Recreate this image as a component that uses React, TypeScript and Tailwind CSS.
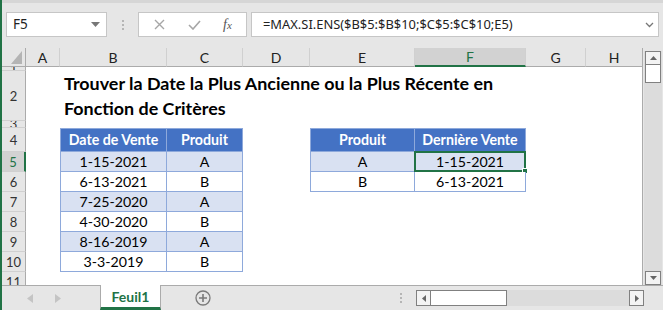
import React from "react";

const CAL = { fontFamily: "Lato, 'Liberation Sans', sans-serif" };
const UI = { fontFamily: "'Noto Sans', 'Open Sans', sans-serif" };

const cols = ["A", "B", "C", "D", "E", "F", "G", "H"];

type Cell = {
  text?: string;
  kind?: "head" | "light" | "white";
  bl?: boolean;
  bt?: boolean;
  selected?: boolean;
};

const TB = "border-[#8EA9DB]";

function DataCell({ c }: { c?: Cell }) {
  if (!c) return <div className="bg-white" />;
  const bg =
    c.kind === "head" ? "bg-[#4472C4] text-white font-bold" : c.kind === "light" ? "bg-[#D9E1F2] text-black" : "bg-white text-black";
  return (
    <div
      className={`relative flex items-center justify-center text-[14.2px] border-r border-b ${TB} ${c.bl ? "border-l" : ""} ${
        c.bt ? "border-t" : ""
      } ${bg}`}
      style={CAL}
    >
      {c.text}
      {c.selected && (
        <div className="absolute -left-[1px] -top-[1px] -right-[1px] -bottom-[1px] border-2 border-[#217346]">
          <div className="absolute -right-[4px] -bottom-[4px] w-[6px] h-[6px] bg-[#217346] border border-white" />
        </div>
      )}
    </div>
  );
}

function RowHead({ n, sel }: { n: number; sel?: boolean }) {
  return (
    <div
      className={`flex items-center justify-center overflow-hidden text-[13px] border-b border-[#d0d0d0] ${
        sel ? "bg-[#d2d2d2] text-[#217346] border-r-2 border-r-[#217346]" : "bg-[#e6e6e6] text-[#333] border-r border-r-[#ababab]"
      }`}
      style={CAL}
    >
      <span className="leading-[16px]">{n}</span>
    </div>
  );
}

const leftTable: [string, string][] = [
  ["1-15-2021", "A"],
  ["6-13-2021", "B"],
  ["7-25-2020", "A"],
  ["4-30-2020", "B"],
  ["8-16-2019", "A"],
  ["3-3-2019", "B"],
];

function buildRow(r: number): (Cell | undefined)[] {
  const row: (Cell | undefined)[] = new Array(8).fill(undefined);
  if (r === 4) {
    row[1] = { text: "Date de Vente", kind: "head", bl: true, bt: true };
    row[2] = { text: "Produit", kind: "head", bt: true };
    row[4] = { text: "Produit", kind: "head", bl: true, bt: true };
    row[5] = { text: "Dernière Vente", kind: "head", bt: true };
  }
  if (r >= 5 && r <= 10) {
    const [d, p] = leftTable[r - 5];
    const kind = r % 2 === 1 ? "light" : "white";
    row[1] = { text: d, kind, bl: true };
    row[2] = { text: p, kind };
  }
  if (r === 5) {
    row[4] = { text: "A", kind: "light", bl: true };
    row[5] = { text: "1-15-2021", kind: "light", selected: true };
  }
  if (r === 6) {
    row[4] = { text: "B", kind: "white", bl: true };
    row[5] = { text: "6-13-2021", kind: "white" };
  }
  return row;
}

export default function App() {
  const rows = [1, 2, 3, 4, 5, 6, 7, 8, 9, 10, 11];
  return (
    <div className="w-[663px] h-[310px] overflow-hidden bg-[#e6e6e6] border-l-2 border-[#217346] flex flex-col" style={UI}>
      {/* top strip */}
      <div className="h-[3px] bg-[#d6d6d6]" />
      {/* formula bar */}
      <div className="h-[45px] flex items-start pt-[9px] pl-[4px]">
        <div className="w-[101px] h-[25px] bg-white border border-[#c6c6c6] flex items-center pl-[6px] pr-[6px] justify-between">
          <span className="text-[13.5px] text-[#222]">F5</span>
          <svg width="9" height="5" viewBox="0 0 9 5">
            <path d="M0 0 H9 L4.5 5 Z" fill="#777" />
          </svg>
        </div>
        <div className="w-[31px] h-[25px] flex flex-col items-center justify-center gap-[2px]">
          <div className="w-[2px] h-[2px] bg-[#b5b5b5]" />
          <div className="w-[2px] h-[2px] bg-[#b5b5b5]" />
          <div className="w-[2px] h-[2px] bg-[#b5b5b5]" />
        </div>
        <div className="w-[109px] h-[25px] bg-white border border-[#c6c6c6] flex items-center">
          <div className="w-[40px] flex justify-center">
            <svg width="11" height="11" viewBox="0 0 11 11">
              <path d="M1 1 L10 10 M10 1 L1 10" stroke="#a6a6a6" strokeWidth="1.4" />
            </svg>
          </div>
          <div className="w-[30px] flex justify-center">
            <svg width="13" height="10" viewBox="0 0 13 10">
              <path d="M1 5 L5 9 L12 1" stroke="#a6a6a6" strokeWidth="1.6" fill="none" />
            </svg>
          </div>
          <div className="flex-1 flex justify-center">
            <span className="text-[14px] italic text-[#555]" style={{ fontFamily: "'Liberation Serif', serif" }}>
              f<span className="text-[11px]">x</span>
            </span>
          </div>
        </div>
        <div className="ml-[4px] w-[408px] h-[25px] bg-white border border-[#c6c6c6] flex items-center pl-[11px] pr-[4px] justify-between">
          <span className="text-[12.9px] text-[#222] whitespace-nowrap">=MAX.SI.ENS($B$5:$B$10;$C$5:$C$10;E5)</span>
          <svg width="9" height="6" viewBox="0 0 9 6">
            <path d="M1 1 L4.5 4.5 L8 1" stroke="#777" strokeWidth="1.3" fill="none" />
          </svg>
        </div>
      </div>
      {/* grid area */}
      <div className="h-[237px] flex">
        <div className="w-[641px] h-[237px] overflow-hidden bg-white border-r border-[#ababab]">
          <div className="grid grid-cols-[24px_34px_107px_76px_67px_105px_111px_60px_57px] grid-rows-[19px_4px_50px_7px_24px_20px_20px_20px_20px_20px_20px_20px]">
            {/* header row */}
            <div className="bg-[#e6e6e6] border-r border-b border-[#ababab] relative">
              <svg className="absolute right-[3px] bottom-[2px]" width="11" height="13" viewBox="0 0 11 13">
                <path d="M11 0 V13 H0 Z" fill="#b4b4b4" />
              </svg>
            </div>
            {cols.map((c) => (
              <div
                key={c}
                className={`flex items-center justify-center text-[14px] border-r border-r-[#d0d0d0] ${
                  c === "F" ? "bg-[#d2d2d2] text-[#217346] border-b-2 border-b-[#217346]" : "bg-[#e6e6e6] text-[#222] border-b border-b-[#ababab]"
                }`}
                style={CAL}
              >
                {c}
              </div>
            ))}
            {rows.map((r) => {
              if (r === 2) {
                return (
                  <React.Fragment key={r}>
                    <RowHead n={r} />
                    <div className="bg-white" />
                    <div className="col-span-7 bg-white flex flex-col justify-center pl-[4px]" style={CAL}>
                      <div className="text-[17.9px] font-bold text-black leading-[25px] whitespace-nowrap">
                        Trouver la Date la Plus Ancienne ou la Plus Récente en
                      </div>
                      <div className="text-[17.9px] font-bold text-black leading-[25px]">Fonction de Critères</div>
                    </div>
                  </React.Fragment>
                );
              }
              const cells = buildRow(r);
              return (
                <React.Fragment key={r}>
                  <RowHead n={r} sel={r === 5} />
                  {cells.map((c, i) => (
                    <DataCell key={i} c={c} />
                  ))}
                </React.Fragment>
              );
            })}
          </div>
        </div>
        {/* vertical scrollbar */}
        <div className="w-[20px] h-[237px] bg-[#e6e6e6] flex flex-col items-end pt-[3px] pr-[1px]">
          <div className="w-[18px] flex-1 bg-[#dcdcdc] flex flex-col items-center">
            <div className="w-[16px] h-[14px] bg-[#f3f3f3] border border-[#808080] flex items-center justify-center">
              <svg width="7" height="4" viewBox="0 0 7 4">
                <path d="M0 4 L3.5 0 L7 4 Z" fill="#666" />
              </svg>
            </div>
            <div className="w-[16px] h-[18px] bg-white border border-t-0 border-[#808080]" />
            <div className="flex-1" />
            <div className="w-[16px] h-[14px] bg-[#f3f3f3] border border-[#808080] flex items-center justify-center">
              <svg width="7" height="4" viewBox="0 0 7 4">
                <path d="M0 0 L3.5 4 L7 0 Z" fill="#666" />
              </svg>
            </div>
          </div>
        </div>
      </div>
      {/* bottom tab bar */}
      <div className="h-[25px] flex border-t border-[#ababab] items-stretch">
        <div className="w-[98px] flex items-center gap-[22px] pl-[25px]">
          <svg width="6" height="9" viewBox="0 0 6 9">
            <path d="M6 0 V9 L0 4.5 Z" fill="#c4c4c4" />
          </svg>
          <svg width="6" height="9" viewBox="0 0 6 9">
            <path d="M0 0 V9 L6 4.5 Z" fill="#c4c4c4" />
          </svg>
        </div>
        <div className="-mt-[1px] w-[61px] bg-white border-l border-r border-[#ababab] border-b-[3px] border-b-[#217346] flex items-center justify-center">
          <span className="text-[14px] font-bold text-[#217346]" style={CAL}>
            Feuil1
          </span>
        </div>
        <div className="w-[84px] flex items-center justify-center">
          <svg width="16" height="16" viewBox="0 0 16 16">
            <circle cx="8" cy="8" r="7" stroke="#7a7a7a" strokeWidth="1.3" fill="none" />
            <path d="M8 4 V12 M4 8 H12" stroke="#7a7a7a" strokeWidth="1.6" />
          </svg>
        </div>
        <div className="w-[171px] flex items-center justify-end pr-[14px]">
          <div className="flex flex-col gap-[2px]">
            <div className="w-[2px] h-[2px] bg-[#b5b5b5]" />
            <div className="w-[2px] h-[2px] bg-[#b5b5b5]" />
            <div className="w-[2px] h-[2px] bg-[#b5b5b5]" />
          </div>
        </div>
        <div className="flex items-center">
          <div className="w-[228px] h-[16px] bg-[#dcdcdc] flex">
            <div className="w-[15px] h-[16px] bg-[#f3f3f3] border border-[#808080] flex items-center justify-center">
              <svg width="4" height="7" viewBox="0 0 4 7">
                <path d="M4 0 V7 L0 3.5 Z" fill="#666" />
              </svg>
            </div>
            <div className="w-[76px] h-[16px] bg-white border border-l-0 border-[#808080]" />
            <div className="flex-1" />
            <div className="w-[15px] h-[16px] bg-[#f3f3f3] border border-[#808080] flex items-center justify-center">
              <svg width="4" height="7" viewBox="0 0 4 7">
                <path d="M0 0 V7 L4 3.5 Z" fill="#666" />
              </svg>
            </div>
          </div>
        </div>
      </div>
    </div>
  );
}
